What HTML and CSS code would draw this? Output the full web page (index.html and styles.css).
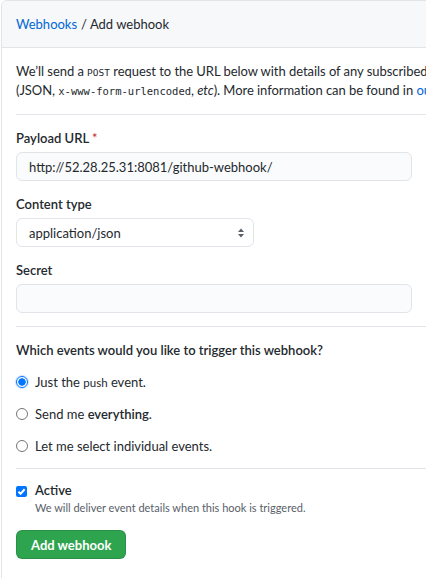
FILE: index.html
```html
<!DOCTYPE html>
<html>
<head>
<meta charset="utf-8">
<link rel="stylesheet" href="styles.css">
</head>
<body>
<div class="box">
  <div class="box-header">
    <a class="crumb" href="#">Webhooks</a> / Add webhook
  </div>
  <div class="box-body">
    <p class="intro">We’ll send a <code class="sc">POST</code> request to the URL below with details of any subscribed events. You can also specify which data format you’d like to receive<br>(JSON, <code>x-www-form-urlencoded</code>, <em>etc</em>). More information can be found in <a href="#">our developer documentation</a>.</p>
    <div class="divider"></div>
    <div class="field">
      <label class="lbl">Payload URL <span class="req">*</span></label>
      <input class="input wide" type="text" value="http://52.28.25.31:8081/github-webhook/">
    </div>
    <div class="field">
      <label class="lbl">Content type</label>
      <div class="select">
        <span>application/json</span>
        <svg width="8" height="12" viewBox="0 0 8 12"><path d="M4 1.5 L7 5 H1 Z M4 10.5 L7 7 H1 Z" fill="#586069"/></svg>
      </div>
    </div>
    <div class="field">
      <label class="lbl">Secret</label>
      <input class="input wide" type="text" value="">
    </div>
    <div class="divider gap"></div>
    <p class="question">Which events would you like to trigger this webhook?</p>
    <div class="radio"><span class="rb on"></span><span>Just the <code class="small">push</code> event.</span></div>
    <div class="radio"><span class="rb"></span><span>Send me <span class="semi">everything</span>.</span></div>
    <div class="radio"><span class="rb"></span><span>Let me select individual events.</span></div>
    <div class="divider after-radios"></div>
    <div class="check">
      <span class="cb"><svg width="9" height="9" viewBox="0 0 10 10"><path d="M1.6 5.2 L4 7.5 L8.5 2.5" stroke="#fff" stroke-width="2.2" fill="none"/></svg></span>
      <div>
        <div class="check-title">Active</div>
        <div class="note">We will deliver event details when this hook is triggered.</div>
      </div>
    </div>
    <button class="btn">Add webhook</button>
  </div>
</div>
</body>
</html>
```
FILE: styles.css
```css
html, body {
  margin: 0;
  padding: 0;
  background: #fff;
  overflow: hidden;
}
body {
  font-family: "Lato", "Noto Sans", sans-serif;
  font-size: 13px;
  color: #24292e;
  width: 426px;
  height: 578px;
}
.box {
  width: 900px;
  border: 1px solid #e1e4e8;
  border-radius: 6px 0 0 0;
  margin-left: 1px;
  min-height: 600px;
}
.box-header {
  background: #f6f8fa;
  border-bottom: 1px solid #e1e4e8;
  border-radius: 6px 0 0 0;
  height: 46px;
  display: flex;
  align-items: center;
  padding-left: 14px;
  font-size: 13px;
}
.crumb {
  color: #0366d6;
  text-decoration: none;
  margin-right: 4px;
}
.box-body {
  padding: 0 14px;
}
.intro {
  margin: 0;
  padding: 14px 0 14px;
  line-height: 19px;
  white-space: nowrap;
  letter-spacing: -0.05px;
}
.intro a { color: #0366d6; text-decoration: none; }
code {
  font-family: "DejaVu Sans Mono", "Liberation Mono", monospace;
  font-size: 10.5px;
  line-height: 1;
  letter-spacing: 0;
}
code.sc { font-size: 9.5px; }
code.small { font-family: "Lato", sans-serif; font-size: 11.5px; }
.divider {
  height: 1px;
  background: #e1e4e8;
  width: 410px;
}
.divider.gap { margin-top: 13px; }
.divider.after-radios { margin-top: 6px; }
.field {
  display: flex;
  flex-direction: column;
}
.lbl {
  font-weight: 600;
  line-height: 20px;
  margin: 13px 0 4px;
}
.req { color: #cb2431; font-weight: 400; }
.input {
  box-sizing: border-box;
  height: 29px;
  border: 1px solid #e1e4e8;
  border-radius: 6px;
  background: #fafbfc;
  padding: 0 12px;
  font-family: inherit;
  font-size: 13px;
  color: #24292e;
  outline: none;
}
.wide { width: 396px; }
.select {
  box-sizing: border-box;
  width: 238px;
  height: 29px;
  border: 1px solid #e1e4e8;
  border-radius: 6px;
  background: #fff;
  display: flex;
  align-items: center;
  justify-content: space-between;
  padding: 0 8px 0 12px;
}
.question {
  margin: 13px 0 6px;
  font-weight: 600;
  line-height: 20px;
}
.radio {
  display: flex;
  align-items: center;
  gap: 7px;
  height: 32px;
}
.rb {
  box-sizing: border-box;
  width: 12px;
  height: 12px;
  border-radius: 50%;
  border: 1px solid #767676;
  background: #fff;
}
.rb.on {
  border: 1px solid #0075ff;
  background: radial-gradient(circle, #0075ff 0 3.4px, #fff 4px);
  box-shadow: 0 0 0 1px #cfe3ff;
}
.semi { font-weight: 600; }
.check {
  display: flex;
  gap: 8px;
  margin-top: 12px;
}
.cb {
  box-sizing: border-box;
  flex: none;
  width: 11px;
  height: 11px;
  border-radius: 2px;
  background: #0075ff;
  display: flex;
  align-items: center;
  justify-content: center;
  margin-top: 5px;
}
.check-title {
  font-weight: 600;
  line-height: 19px;
}
.note {
  font-size: 11px;
  color: #586069;
  line-height: 15px;
}
.btn {
  display: block;
  margin-top: 15px;
  height: 29px;
  padding: 0 14px;
  border: 1px solid rgba(27,31,35,0.15);
  border-radius: 6px;
  background: #2ea44f;
  color: #fff;
  font-family: inherit;
  font-weight: 700;
  font-size: 13px;
}
```
